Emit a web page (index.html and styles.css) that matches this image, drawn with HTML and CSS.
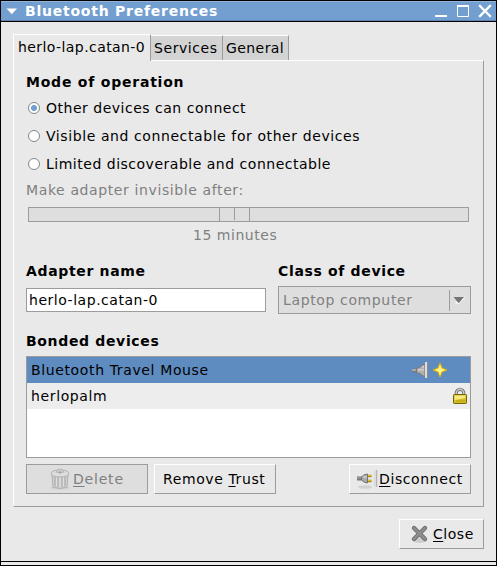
FILE: index.html
```html
<!DOCTYPE html>
<html lang="en">
<head>
<meta charset="utf-8">
<title>Bluetooth Preferences</title>
<link rel="stylesheet" href="styles.css">
</head>
<body>
<div class="window">
  <header class="titlebar">
    <svg class="menu-arrow" width="12" height="7" viewBox="0 0 12 7"><path d="M0.500 0.500H11L5.800 6.200Z" fill="#fff"/></svg>
    <h1>Bluetooth Preferences</h1>
    <svg class="controls" width="57" height="14" viewBox="0 0 57 14" fill="none" stroke="#fff">
      <path d="M0 12H12" stroke-width="2"/>
      <path d="M22 2H34" stroke-width="2"/><path d="M22.500 2V12.500H33.500V2"/>
      <path d="M45 2L55 12M55 2L45 12" stroke-width="2.300" stroke-linecap="square"/>
    </svg>
  </header>
  <main class="body">
    <nav class="tabs">
      <span class="tab active">herlo-lap.catan-0</span>
      <span class="tab services">Services</span>
      <span class="tab general">General</span>
    </nav>
    <section class="panel">
      <h2 class="mode-title">Mode of operation</h2>
      <div class="radio"><i class="dot checked"></i>Other devices can connect</div>
      <div class="radio visible"><i class="dot"></i>Visible and connectable for other devices</div>
      <div class="radio"><i class="dot"></i>Limited discoverable and connectable</div>
      <p class="timeout">Make adapter invisible after:</p>
      <div class="slider"><div class="thumb"><i></i></div></div>
      <p class="minutes"><span>15 minutes</span></p>
      <div class="fields">
        <div class="field name"><h2>Adapter name</h2><div class="entry">herlo-lap.catan-0</div></div>
        <div class="field class"><h2>Class of device</h2>
          <div class="combo"><span>Laptop computer</span><i></i>
            <svg width="12" height="8" viewBox="0 0 12 8"><path d="M2 7L6 8L12 1.500L11 1Z" fill="#fff"/><path d="M0.500 1H11L6 7H5.500Z" fill="#757575"/></svg>
          </div>
        </div>
      </div>
      <h2 class="bonded">Bonded devices</h2>
      <div class="list">
        <div class="row selected"><span>Bluetooth Travel Mouse</span>
          <svg class="plug-in" width="18" height="18" viewBox="0 0 18 18">
            <path d="M0 9.500H6" stroke="#777" stroke-width="3.600"/><path d="M0 9H7" stroke="#bbb" stroke-width="1.500"/>
            <path d="M4.500 7.500Q8 7 11 3.500H13V15H11Q8 12 4.500 11.500Z" fill="#b0b0b0" stroke="#777"/>
            <path d="M6 8.800H12M10 6H12" stroke="#ddd"/><path d="M14 1V17" stroke="#ddd" stroke-width="2"/><path d="M15.500 1V17" stroke="#8d8d8d"/>
          </svg>
          <svg class="star" width="16" height="16" viewBox="0 0 16 16"><path d="M8 1L10 6L15 8L10 10L8 15L6 10L1 8L6 6Z" fill="#ffed62" stroke="#dab20c"/><path d="M8 4L9.300 6.700L12 8L9.300 9.300L8 12L6.700 9.300L4 8L6.700 6.700Z" fill="#fff394"/></svg>
        </div>
        <div class="row"><span>herlopalm</span>
          <svg class="lock" width="16" height="18" viewBox="0 0 16 18">
            <path d="M4.300 9V6A3.700 3.700 0 0 1 11.700 6V9" fill="none" stroke="#777" stroke-width="3.200"/><path d="M4.300 9V6A3.700 3.700 0 0 1 11.700 6V9" fill="none" stroke="#ccc" stroke-width="1.400"/>
            <rect x="1.500" y="7.500" width="13" height="9" rx=".7" fill="#d5bd25" stroke="#756500"/><path d="M2.500 8.500H13.500V11L2.500 13Z" fill="#f4e982"/><path d="M4 14H13" stroke="#b89f13"/>
          </svg>
        </div>
      </div>
      <div class="actions">
        <div class="button disabled delete">
          <svg width="22" height="24" viewBox="0 0 22 24">
            <ellipse cx="11" cy="20.500" rx="10" ry="2" fill="#cfcfcf"/>
            <path d="M3 8L4 20Q11 23 18 20L19 8Z" fill="#d0d0d0" stroke="#b0b0b0"/>
            <path d="M6 10V19M9 10V20M13 10V20M16 10V19" stroke="#b0b0b0" stroke-width="1.300"/><path d="M7.500 10V19M11 10V20M14.500 10V19" stroke="#e0e0e0"/>
            <ellipse cx="11" cy="6.500" rx="9" ry="3.500" fill="#ddd" stroke="#b0b0b0"/>
            <path d="M7 6Q7 2 11 2T15 6" fill="#ccc" stroke="#b8b8b8"/><ellipse cx="11" cy="5.500" rx="2" ry="1" fill="#a4a4a4"/>
          </svg><span><u>D</u>elete</span>
        </div>
        <div class="button trust"><span>Remove <u>T</u>rust</span></div>
        <div class="button disconnect">
          <svg width="22" height="22" viewBox="0 0 22 22">
            <ellipse cx="8" cy="19" rx="7" ry="1.800" fill="#d2d2d2"/>
            <path d="M0 10.500H6" stroke="#777" stroke-width="4"/><path d="M0 10H6" stroke="#aaa"/>
            <path d="M4.500 9Q7 6 10.500 6V15Q7 15 4.500 12Z" fill="#aaa" stroke="#747474"/><path d="M6 9H10" stroke="#e3e3e3"/>
            <path d="M11 8H14.500M11 13H14.500" stroke="#a58d16" stroke-width="2.500"/><path d="M11 7.500H14.500M11 12.500H14.500" stroke="#dfbd21"/>
            <path d="M17.500 3Q16.500 10 17.500 18" fill="none" stroke="#ddd"/><path d="M19.500 2V19" stroke="#b4b4b4" stroke-width="1.500"/>
          </svg><span><u>D</u>isconnect</span>
        </div>
      </div>
    </section>
    <div class="button close">
      <svg width="20" height="20" viewBox="0 0 20 20"><ellipse cx="10" cy="16.500" rx="7" ry="2.500" fill="#cfcfcf"/><path d="M4 4L15 15M15 4L4 15" stroke="#666" stroke-width="4.300" stroke-linecap="round"/><path d="M4 4L15 15M15 4L4 15" stroke="#8d8d8d" stroke-width="2.600" stroke-linecap="round"/></svg>
      <span><u>C</u>lose</span>
    </div>
  </main>
  <footer class="resize"></footer>
</div>
</body>
</html>
```
FILE: styles.css
```css
* { box-sizing: border-box; }
body { margin: 0; font: 14px/24px "DejaVu Sans", sans-serif; letter-spacing: .53px; color: #000; }
h1, h2, p { margin: 0; font-size: inherit; }
h1 { letter-spacing: .76px; }
h2 { letter-spacing: .66px; }
svg { display: block; flex: none; }
span { white-space: nowrap; }
.window { width: 497px; height: 566px; border: 1px solid #000; background: #e9e9e9; display: flex; flex-direction: column; }
.titlebar { height: 21px; flex: none; display: flex; align-items: center; padding: 0 4px 0 5px; background: #729fcf; border-top: 1px solid #92b5db; border-bottom: 1px solid #000; box-shadow: inset 0 -1px #5c83b1; color: #fff; line-height: 18px; }
.titlebar h1 { margin: -1px 0 0 7px; flex: 1; white-space: nowrap; }
.controls { margin-top: -2px; }
.body { flex: 1; padding: 12px; display: flex; flex-direction: column; }
.tabs { display: flex; align-items: flex-end; height: 26px; flex: none; letter-spacing: .42px; }
.tab { height: 25px; padding-left: 4px; background: #d3d3d3; border-top: 1px solid #fff; border-right: 1px solid #9c9c9c; }
.tab.active { width: 138px; height: 27px; margin-bottom: -1px; padding-left: 4px; background: #e9e9e9; border-left: 1px solid #fff; line-height: 25px; position: relative; }
.services { width: 72px; padding-left: 3px; letter-spacing: .57px; }
.general { width: 66px; padding-left: 3px; }
.panel { height: 447px; flex: none; padding: 9px 12px 0; border: 1px solid #9c9c9c; border-top-color: #fff; border-left-color: #fff; }
.mode-title { letter-spacing: .78px; }
.radio { height: 28px; display: flex; align-items: center; padding-left: 2px; letter-spacing: .51px; }
.radio.visible { letter-spacing: .59px; }
.dot { width: 12px; height: 12px; margin-right: 6px; border: 1px solid #858585; border-radius: 50%; background: #fff; }
.dot.checked { background: radial-gradient(circle, #729fcf 0 2.700px, #fff 3.300px); }
.timeout, .minutes { color: #808080; }
.timeout { letter-spacing: .61px; }
.slider { height: 15px; margin: 5px 2px 0; border: 1px solid #9c9c9c; background: #dedede; display: flex; justify-content: center; }
.thumb { width: 31px; margin-left: -28px; border: solid #9c9c9c; border-width: 0 1px; display: flex; justify-content: center; }
.thumb i { width: 1px; height: 12px; background: #9c9c9c; }
.minutes { height: 37px; padding: 1px 0 0 167px; }
.fields { display: flex; gap: 12px; height: 70px; }
.field.name { width: 240px; }
.field.class { width: 193px; }
.entry { height: 24px; margin-top: 5px; padding-left: 2px; border: 1px solid #9c9c9c; background: #fff; line-height: 23px; }
.combo { height: 28px; margin-top: 3px; padding-left: 4px; display: flex; align-items: center; border: 1px solid #9c9c9c; background: #dedede; color: #808080; letter-spacing: .63px; }
.combo span { width: 166px; }
.combo i { width: 1px; height: 21px; margin-right: 3px; background: #9c9c9c; }
.bonded { height: 27px; }
.list { height: 102px; border: 1px solid #9c9c9c; background: #fff; letter-spacing: .63px; }
.row { height: 26px; padding-left: 4px; display: flex; align-items: center; background: #ededed; }
.row span { flex: 1; }
.row.selected { background: #5e8cc1; }
.plug-in { margin-right: 2px; }
.star { margin-right: 22px; }
.lock { margin-right: 2px; }
.actions { display: flex; margin-top: 6px; letter-spacing: .6px; }
.button { height: 30px; display: flex; align-items: center; border: 1px solid #9c9c9c; border-top-color: #fff; border-left-color: #fff; }
u { text-decoration-thickness: 1px; text-underline-offset: 2px; }
.disabled { border-color: #9c9c9c; background: #dedede; color: #808080; }
.delete { width: 122px; padding-left: 22px; gap: 2px; letter-spacing: .8px; }
.trust { width: 122px; margin-left: 6px; padding-left: 8px; }
.disconnect { width: 122px; margin-left: auto; padding-left: 7px; }
.close { width: 85px; margin: 12px 0 0 auto; padding-left: 10px; gap: 3px; flex: none; }
.resize { height: 4px; border-top: 1px solid #000; }
```
